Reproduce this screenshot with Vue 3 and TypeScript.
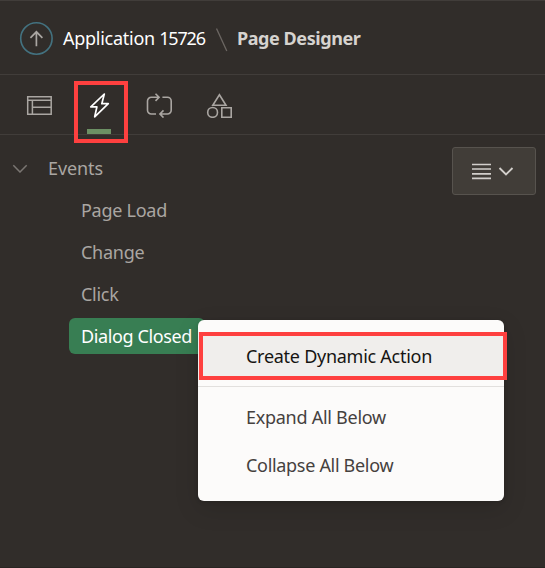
<script setup lang="ts">
import { ref } from 'vue'

interface TreeItem {
  label: string
  key: string
}

const events: TreeItem[] = [
  { label: 'Page Load', key: 'load' },
  { label: 'Change', key: 'change' },
  { label: 'Click', key: 'click' },
  { label: 'Dialog Closed', key: 'closed' },
]
const selected = ref('closed')
</script>

<template>
  <main class="designer">
    <header class="crumbs">
      <button class="up" aria-label="Up">
        <svg width="34" height="34" viewBox="0 0 34 34">
          <circle cx="17.4" cy="16.5" r="15.7" stroke="#437280" stroke-width="1.6" />
          <path d="M17.4 24.3V9.8M11.4 15.8l6-6 6 6" stroke="#aaa6a2" stroke-width="1.7" />
        </svg>
      </button>
      <a class="app">Application <span class="number">15726</span></a>
      <svg class="slash" width="13" height="24" viewBox="0 0 13 24">
        <path d="M.5.5l10.3 22.5" stroke="#6c6763" stroke-width="1.3" />
      </svg>
      <h1>Page Designer</h1>
    </header>

    <nav class="tabs">
      <button class="tab" aria-label="Rendering">
        <svg width="26" height="26" viewBox="0 0 26 26">
          <path d="M1.7 4.7h23.5v17.6H1.7zM1.7 8.3h23.5M6.4 8.3v14M6.4 15.3h18.8" stroke="#aaa6a2" stroke-width="1.5" />
        </svg>
      </button>
      <button class="tab active" aria-label="Dynamic Actions">
        <svg width="26" height="26" viewBox="0 0 26 26">
          <path d="M18.3 2L4.8 14.9h6.1L8.7 24.8 22.3 11.7h-6.5z" stroke="#fff" stroke-width="1.7" stroke-linejoin="round" />
        </svg>
      </button>
      <button class="tab" aria-label="Processing">
        <svg width="26" height="26" viewBox="0 0 26 26">
          <path d="M10 22H5.3a3.8 3.8 0 0 1-3.8-3.8V9.1a3.8 3.8 0 0 1 3.8-3.8h7.2M9.5 1.7l3.6 3.6-3.6 3.6M16.4 5.3h5a3.8 3.8 0 0 1 3.8 3.8v9.1a3.8 3.8 0 0 1-3.8 3.8H14M17.5 18.4L13.9 22l3.6 3.6" stroke="#aaa6a2" stroke-width="1.6" />
        </svg>
      </button>
      <button class="tab" aria-label="Shared Components">
        <svg width="26" height="26" viewBox="0 0 26 26">
          <path d="M13.4 2.7L20 13.2H6.8zM15.8 15.8h9.4v9.4h-9.4z" stroke="#aaa6a2" stroke-width="1.6" />
          <circle cx="6.6" cy="20.4" r="4.9" stroke="#aaa6a2" stroke-width="1.6" />
        </svg>
      </button>
      <div class="mark mark-tab"></div>
    </nav>

    <section class="body">
      <div class="tree">
        <div class="row root">
          <svg width="16" height="10" viewBox="0 0 16 10">
            <path d="M1.3 2.3L8 9l6.7-6.7" stroke="#7a7672" stroke-width="1.5" />
          </svg>
          <span>Events</span>
        </div>
        <div v-for="e in events" :key="e.key" class="row">
          <span class="leaf" :class="{ selected: e.key === selected }" @click="selected = e.key">{{ e.label }}</span>
        </div>
      </div>
      <button class="menu-button" aria-label="Menu">
        <svg width="20" height="17" viewBox="0 0 20 17">
          <path d="M0 1.5h19M0 6h19M0 10.8h19M0 15.3h19" stroke="#d2cfcb" stroke-width="1.7" />
        </svg>
        <svg width="16" height="10" viewBox="0 0 16 10">
          <path d="M1.5 2L8 8.5 14.5 2" stroke="#d2cfcb" stroke-width="1.9" />
        </svg>
      </button>
    </section>

    <div class="popup" role="menu">
      <div class="item focus">Create Dynamic Action</div>
      <div class="separator"></div>
      <div class="item">Expand All Below</div>
      <div class="item collapse">Collapse All Below</div>
      <div class="mark mark-item"></div>
    </div>
  </main>
</template>

<style>
body {
  background: #312d2a;
}
</style>

<style scoped>
.designer {
  position: relative;
  box-sizing: border-box;
  height: 568px;
  overflow: hidden;
  background: #312d2a;
  border-top: 1px solid #413d3a;
  border-bottom: 1px solid #292522;
  color: #aaa6a2;
  font: 18px/24px "Noto Sans", "Open Sans", sans-serif;
  letter-spacing: -0.27px;
  white-space: nowrap;
}
svg {
  display: block;
  fill: none;
}
button {
  display: flex;
  align-items: center;
  justify-content: center;
  border: 0;
  padding: 0;
  background: none;
}
.crumbs {
  display: flex;
  align-items: center;
  box-sizing: border-box;
  height: 74px;
  padding: 0 0 0 19px;
  border-bottom: 1px solid #413d3a;
}
.up {
  width: 34px;
  margin-top: 2px;
}
.app {
  width: 153px;
  margin-left: 10px;
  color: #fff;
}
.number {
  letter-spacing: -1.2px;
}
.app,
h1 {
  padding-top: 1px;
}
.slash {
  margin: 4px 8px 0 0;
}
h1 {
  margin: 0;
  font-size: 18px;
  font-weight: 700;
  letter-spacing: -0.43px;
  color: #d6d3cf;
}
.tabs {
  position: relative;
  display: flex;
  box-sizing: border-box;
  height: 60px;
  padding-left: 9px;
  border-bottom: 1px solid #413d3a;
}
.tab {
  box-sizing: border-box;
  width: 60px;
  height: 59px;
  padding-top: 1px;
}
.tab.active {
  background: linear-gradient(#6c9064, #6c9064) center 54px / 24px 5px no-repeat;
}
.mark {
  position: absolute;
  box-sizing: border-box;
  border: 4px solid #fe403f;
  pointer-events: none;
}
.mark-tab {
  left: 74px;
  top: 6px;
  width: 54px;
  height: 62px;
}
.body {
  display: flex;
  justify-content: space-between;
  padding: 12px 9px 0 12px;
}
.row {
  display: flex;
  align-items: center;
  height: 42px;
  padding-left: 57px;
}
.root {
  gap: 20px;
  padding-left: 0;
  letter-spacing: -0.1px;
}
.leaf {
  box-sizing: border-box;
  height: 36px;
  padding: 6px 12px;
  border-radius: 6px;
}
.leaf.selected {
  width: 136px;
  background: #387e53;
  color: #fff;
  letter-spacing: -0.38px;
}
.menu-button {
  box-sizing: border-box;
  width: 84px;
  height: 48px;
  gap: 6px;
  padding-right: 2px;
  border: 1px solid #57534e;
  border-radius: 3px;
  background: #413d38;
}
.popup {
  position: absolute;
  left: 198px;
  top: 319px;
  box-sizing: border-box;
  width: 306px;
  height: 181px;
  padding: 12px 0;
  border-radius: 6px;
  background: #fcfbfa;
  color: #45413e;
  box-shadow: 0 8px 24px rgba(0, 0, 0, 0.13), 0 1px 4px rgba(0, 0, 0, 0.15);
}
.item {
  display: flex;
  align-items: center;
  box-sizing: border-box;
  height: 48px;
  padding-left: 48px;
}
.item.focus {
  background: #f0eeec;
  color: #161513;
}
.item.collapse {
  letter-spacing: -0.31px;
}
.separator {
  height: 1px;
  margin: 6px 0;
  background: #e2e0de;
}
.mark-item {
  left: 1px;
  top: 12px;
  width: 308px;
  height: 48px;
}
</style>
